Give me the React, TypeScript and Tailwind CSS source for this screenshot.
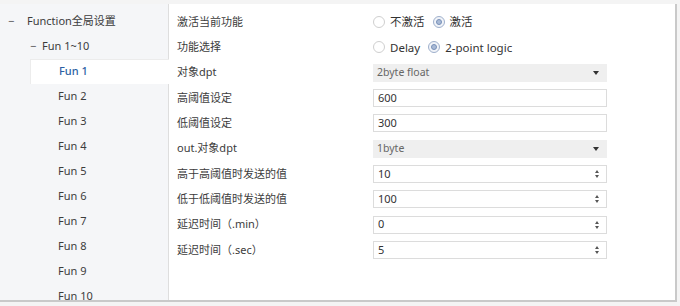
import React from 'react';

const font = { fontFamily: '"Noto Sans", "Noto Sans CJK SC", sans-serif' };

const funs = ['Fun 1', 'Fun 2', 'Fun 3', 'Fun 4', 'Fun 5', 'Fun 6', 'Fun 7', 'Fun 8', 'Fun 9', 'Fun 10'];

const Radio = ({ label, checked }: { label: string; checked?: boolean }) => (
  <div className="flex items-center gap-[5px] mr-[8px]">
    <span
      className={`w-[12px] h-[12px] rounded-full border flex items-center justify-center ${
        checked ? 'border-[#9fb0cc] bg-[#f0f3f8]' : 'border-[#cfcfcf] bg-white'
      }`}
    >
      {checked && <span className="w-[6px] h-[6px] rounded-full bg-[#a9bad6] border border-[#7890b8]" />}
    </span>
    <span className="text-[11.5px] text-[#333]">{label}</span>
  </div>
);

const Select = ({ value }: { value: string }) => (
  <div className="w-[234px] h-[18px] bg-[#efefef] flex items-center justify-between px-[4px]">
    <span className="text-[10.5px] text-[#666]">{value}</span>
    <span className="w-0 h-0 mr-[4px] border-l-[3px] border-r-[3px] border-t-[4px] border-l-transparent border-r-transparent border-t-[#333]" />
  </div>
);

const Input = ({ value, spin }: { value: string; spin?: boolean }) => (
  <div className="w-[234px] h-[18px] bg-white border border-[#dcdcdc] flex items-center justify-between pl-[4px] pr-[7px]">
    <span className="text-[11px] text-[#333]">{value}</span>
    {spin && (
      <span className="flex flex-col items-center gap-[2px]">
        <span className="w-0 h-0 border-l-[2px] border-r-[2px] border-b-[3px] border-l-transparent border-r-transparent border-b-[#555]" />
        <span className="w-0 h-0 border-l-[2px] border-r-[2px] border-t-[3px] border-l-transparent border-r-transparent border-t-[#555]" />
      </span>
    )}
  </div>
);

const Row = ({ label, children }: { label: string; children: React.ReactNode }) => (
  <div className="h-[25.33px] flex items-center">
    <div className="w-[196px] text-[11px] text-[#3c3c3c]">{label}</div>
    <div className="flex items-center">{children}</div>
  </div>
);

export default function App() {
  return (
    <div className="w-[680px] h-[306px] bg-[#f4f4f4] pt-[4px] overflow-hidden" style={font}>
      <div className="w-[677px] h-[298px] flex bg-white border-r-2 border-b-2 border-[#c9c9c9]">
        <div className="w-[169px] bg-[#f5f6f8] border-r border-[#dedede] pt-[4.5px]">
          <div className="h-[25px] flex items-center pl-[8px] text-[11px] text-[#3c3c3c]">
            <span className="w-[19px] text-[#555]">−</span>
            <span>Function全局设置</span>
          </div>
          <div className="h-[25px] flex items-center pl-[30px] text-[11px] text-[#3c3c3c]">
            <span className="w-[12px] text-[#555]">−</span>
            <span>Fun 1~10</span>
          </div>
          {funs.map((f, i) => (
            <div
              key={f}
              className={`h-[25px] flex items-center ml-[30px] pl-[28px] -mr-px text-[11px] ${
                i === 0 ? 'bg-white text-[#2b5fa3] font-medium border-t border-l border-[#ececec]' : 'text-[#3c3c3c]'
              }`}
            >
              {f}
            </div>
          ))}
        </div>
        <div className="flex-1 pl-[8px] pt-[5.3px]">
          <Row label="激活当前功能">
            <Radio label="不激活" />
            <Radio label="激活" checked />
          </Row>
          <Row label="功能选择">
            <Radio label="Delay" />
            <Radio label="2-point logic" checked />
          </Row>
          <Row label="对象dpt">
            <Select value="2byte float" />
          </Row>
          <Row label="高阈值设定">
            <Input value="600" />
          </Row>
          <Row label="低阈值设定">
            <Input value="300" />
          </Row>
          <Row label="out.对象dpt">
            <Select value="1byte" />
          </Row>
          <Row label="高于高阈值时发送的值">
            <Input value="10" spin />
          </Row>
          <Row label="低于低阈值时发送的值">
            <Input value="100" spin />
          </Row>
          <Row label="延迟时间（.min）">
            <Input value="0" spin />
          </Row>
          <Row label="延迟时间（.sec）">
            <Input value="5" spin />
          </Row>
        </div>
      </div>
    </div>
  );
}
